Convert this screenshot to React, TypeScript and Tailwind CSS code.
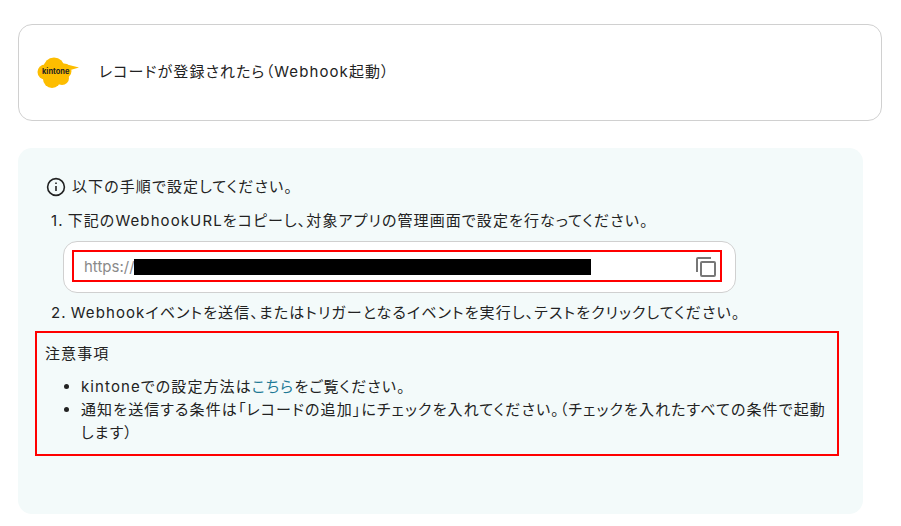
function KintoneLogo() {
  return (
    <div className="relative mt-[3px] h-[32px] w-[44px] shrink-0">
      <svg width="44" height="32" viewBox="0 0 44 32" fill="#fdbd00" className="absolute left-0 top-0">
        <circle cx="17" cy="11" r="10.5" />
        <circle cx="8" cy="15" r="7.5" />
        <circle cx="27" cy="14" r="7.5" />
        <circle cx="25" cy="21" r="7" />
        <circle cx="15" cy="22" r="9" />
        <path d="M28 7 L42 10.5 L30 14 Z" />
      </svg>
      <span className="absolute left-[5px] top-[8px] text-[7.5px] font-bold leading-[14px] tracking-normal text-[#222]">kintone</span>
    </div>
  )
}

export default function App() {
  return (
    <div className="min-h-[526px] bg-white pl-[18px] pr-[19px] pt-[24px] font-['Inter','Noto_Sans_CJK_JP',sans-serif] text-[15px] tracking-[1.1px] text-[#222] [font-feature-settings:'palt']">
      <div className="flex h-[97px] items-center gap-[18px] rounded-[14px] border border-[#d0d0d0] pb-[2px] pl-[18px]">
        <KintoneLogo />
        <span className="leading-[20px]">レコードが登録されたら（Webhook起動）</span>
      </div>

      <div className="mt-[27px] h-[366px] w-[845px] rounded-[14px] bg-[#f3fafa] pl-[28px] pt-[29px]">
        <div className="flex h-[20px] items-center gap-[6px]">
          <svg width="20" height="20" viewBox="0 0 20 20" fill="none" stroke="#222" strokeWidth="1.6">
            <circle cx="10" cy="10" r="8.4" />
            <path d="M10 9v5" />
            <path d="M10 5.4v1.6" />
          </svg>
          <span>以下の手順で設定してください。</span>
        </div>

        <div className="mt-[14px] flex h-[20px] items-center gap-[4px] pl-[5px]">
          <span>1.</span>
          <span>下記のWebhookURLをコピーし、対象アプリの管理画面で設定を行なってください。</span>
        </div>

        <div className="relative ml-[17px] mt-[10px] flex h-[52px] w-[673px] items-center rounded-[14px] border border-[#d0d0d0] bg-white pl-[20px] pr-[19px]">
          <span className="tracking-normal text-[#8a8a8a]">https://</span>
          <div className="absolute left-[70px] top-[17px] h-[16px] w-[457px] bg-black" />
          <svg width="20" height="20" viewBox="0 0 20 20" fill="none" stroke="#777" strokeWidth="2" className="ml-auto">
            <path d="M1 15V2a1 1 0 0 1 1-1h13" />
            <rect x="5" y="5" width="14" height="14" rx="1" />
          </svg>
          <div className="absolute left-[8px] top-[8px] h-[32px] w-[650px] border-[2px] border-[#f00]" />
        </div>

        <div className="mt-[10px] flex h-[20px] items-center gap-[4px] pl-[5px]">
          <span>2.</span>
          <span>Webhookイベントを送信、またはトリガーとなるイベントを実行し、テストをクリックしてください。</span>
        </div>

        <div className="relative mt-[8px]">
          <div className="absolute -left-[11px] top-0 h-[125px] w-[804px] border-[2px] border-[#f00]" />
          <div className="-ml-[1px] pt-[13px] leading-[20px]">注意事項</div>
          <ul className="mt-[11px] w-[787px] list-disc pl-[35px] leading-[23px]">
            <li>
              kintoneでの設定方法は<span className="text-[#1f7a96]">こちら</span>をご覧ください。
            </li>
            <li>通知を送信する条件は「レコードの追加」にチェックを入れてください。（チェックを入れたすべての条件で起動します）</li>
          </ul>
        </div>
      </div>
    </div>
  )
}
